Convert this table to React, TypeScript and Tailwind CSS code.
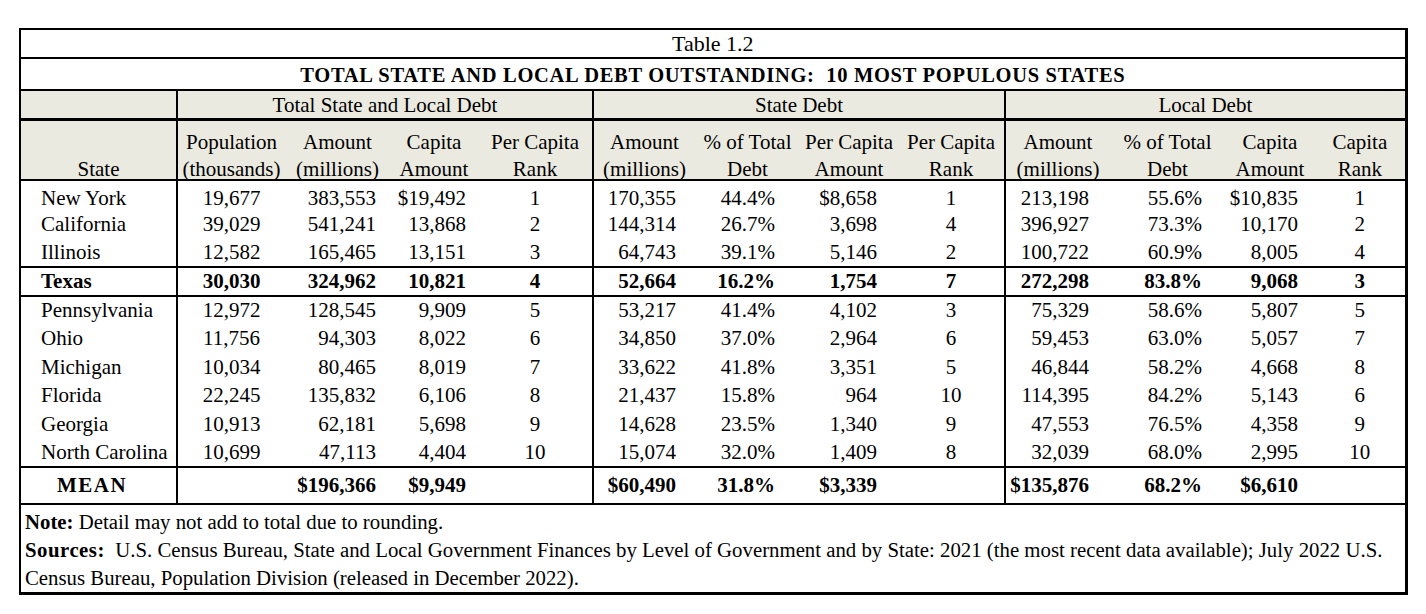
import React from "react";

const rows: string[][] = [
  ["New York", "19,677", "383,553", "$19,492", "1", "170,355", "44.4%", "$8,658", "1", "213,198", "55.6%", "$10,835", "1"],
  ["California", "39,029", "541,241", "13,868", "2", "144,314", "26.7%", "3,698", "4", "396,927", "73.3%", "10,170", "2"],
  ["Illinois", "12,582", "165,465", "13,151", "3", "64,743", "39.1%", "5,146", "2", "100,722", "60.9%", "8,005", "4"],
  ["Texas", "30,030", "324,962", "10,821", "4", "52,664", "16.2%", "1,754", "7", "272,298", "83.8%", "9,068", "3"],
  ["Pennsylvania", "12,972", "128,545", "9,909", "5", "53,217", "41.4%", "4,102", "3", "75,329", "58.6%", "5,807", "5"],
  ["Ohio", "11,756", "94,303", "8,022", "6", "34,850", "37.0%", "2,964", "6", "59,453", "63.0%", "5,057", "7"],
  ["Michigan", "10,034", "80,465", "8,019", "7", "33,622", "41.8%", "3,351", "5", "46,844", "58.2%", "4,668", "8"],
  ["Florida", "22,245", "135,832", "6,106", "8", "21,437", "15.8%", "964", "10", "114,395", "84.2%", "5,143", "6"],
  ["Georgia", "10,913", "62,181", "5,698", "9", "14,628", "23.5%", "1,340", "9", "47,553", "76.5%", "4,358", "9"],
  ["North Carolina", "10,699", "47,113", "4,404", "10", "15,074", "32.0%", "1,409", "8", "32,039", "68.0%", "2,995", "10"],
];

const mean = ["MEAN", "", "$196,366", "$9,949", "", "$60,490", "31.8%", "$3,339", "", "$135,876", "68.2%", "$6,610", ""];

const headers: [string, string][] = [
  ["", "State"],
  ["Population", "(thousands)"],
  ["Amount", "(millions)"],
  ["Capita", "Amount"],
  ["Per Capita", "Rank"],
  ["Amount", "(millions)"],
  ["% of Total", "Debt"],
  ["Per Capita", "Amount"],
  ["Per Capita", "Rank"],
  ["Amount", "(millions)"],
  ["% of Total", "Debt"],
  ["Capita", "Amount"],
  ["Capita", "Rank"],
];

const widths = [157, 108, 105, 88, 115, 102, 105, 98, 107, 105, 115, 90, 91];

const align = [
  "text-left pl-[20px]",
  "text-center",
  "text-right pr-[14px]",
  "text-right pr-[12px]",
  "text-center",
  "text-right pr-[19px]",
  "text-right pr-[25px]",
  "text-right pr-[21px]",
  "text-center",
  "text-right pr-[21px]",
  "text-right pr-[23px]",
  "text-right pr-[17px]",
  "text-center",
];

const sep = (i: number) => (i === 0 || i === 4 || i === 8 ? "border-r-2 border-r-black" : "");

export default function App() {
  return (
    <div className="w-[1426px] h-[614px] bg-white pt-[28px] pl-[19px] font-['Liberation_Serif',serif] text-black">
      <table className="table-fixed border-collapse w-[1387px] border-l-2 border-t-2 border-r-[3px] border-b-[3px] border-black text-[21px] leading-[28px]">
        <colgroup>
          {widths.map((w, i) => (
            <col key={i} style={{ width: w }} />
          ))}
        </colgroup>
        <tbody>
          <tr>
            <td colSpan={13} className="h-[29px] text-center border-b-2 border-black leading-[26px] text-[22px]">
              Table 1.2
            </td>
          </tr>
          <tr>
            <td colSpan={13} className="h-[31px] text-center border-b-2 border-black font-bold text-[20.5px] tracking-[0.7px] leading-[28px] pt-[2px]">
              TOTAL STATE AND LOCAL DEBT OUTSTANDING:&nbsp; 10 MOST POPULOUS STATES
            </td>
          </tr>
          <tr className="bg-[#ebeae1]">
            <td className="h-[29px] border-r-2 border-black border-b-[3px]" />
            <td colSpan={4} className="text-center border-r-2 border-black border-b-[3px] leading-[26px] pt-[1px]">
              Total State and Local Debt
            </td>
            <td colSpan={4} className="text-center border-r-2 border-black border-b-[3px] leading-[26px] pt-[1px]">
              State Debt
            </td>
            <td colSpan={4} className="text-center border-b-[3px] border-black leading-[26px] pt-[1px]">
              Local Debt
            </td>
          </tr>
          <tr className="bg-[#ebeae1]">
            {headers.map(([a, b], i) => (
              <td
                key={i}
                className={`h-[58px] text-center align-top pt-[8px] pb-0 border-b-2 border-b-black leading-[27px] whitespace-nowrap ${sep(i)}`}
              >
                <div>{a || "\u00a0"}</div>
                <div className="h-[23px]">{b}</div>
              </td>
            ))}
          </tr>
          {rows.map((r, ri) => {
            const isTexas = r[0] === "Texas";
            const isFirst = ri === 0;
            return (
              <tr
                key={ri}
                className={`${isTexas ? "font-bold border-t-2 border-b-2 border-black" : ""}`}
              >
                {r.map((c, ci) => (
                  <td
                    key={ci}
                    className={`${isFirst ? "h-[30px] pt-[5px]" : "h-[28.5px]"} leading-[24px] whitespace-nowrap ${align[ci]} ${sep(ci)}`}
                  >
                    {c}
                  </td>
                ))}
              </tr>
            );
          })}
          <tr className="font-bold border-t-2 border-black border-b-2">
            {mean.map((c, ci) => (
              <td
                key={ci}
                className={`h-[37px] whitespace-nowrap ${ci === 0 ? "text-left pl-[36px] tracking-[1.5px]" : align[ci]} ${sep(ci)}`}
              >
                {c}
              </td>
            ))}
          </tr>
          <tr>
            <td colSpan={13} className="h-[90px] align-top pl-[4px] pt-[3px] leading-[28px] text-[20.8px] whitespace-nowrap">
              <div>
                <span className="font-bold">Note:</span> Detail may not add to total due to rounding.
              </div>
              <div>
                <span className="font-bold tracking-[0.5px]">Sources:</span>&nbsp; U.S. Census Bureau, State and Local Government Finances by Level of Government and by State: 2021 (the most recent data available); July 2022 U.S.
              </div>
              <div>Census Bureau, Population Division (released in December 2022).</div>
            </td>
          </tr>
        </tbody>
      </table>
    </div>
  );
}
